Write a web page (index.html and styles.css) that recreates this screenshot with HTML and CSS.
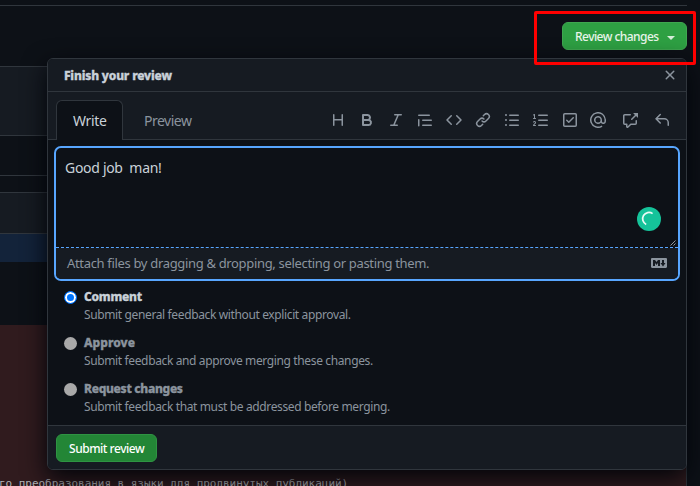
FILE: index.html
```html
<!DOCTYPE html>
<html lang="en">
<head>
<meta charset="utf-8">
<title>Finish your review</title>
<link rel="stylesheet" href="styles.css">
</head>
<body>
<div class="page">
  <header class="toolbar">
    <button class="btn btn-review"><span class="t-review">Review changes</span><i class="caret"></i></button>
  </header>
  <main class="diff">
    <div class="band band-head"></div>
    <div class="band band-gap"></div>
    <div class="band band-thin"></div>
    <div class="band band-file"></div>
    <div class="band band-hunk"></div>
    <div class="band band-empty"></div>
    <div class="band band-deleted"><code>го преобразования в языки для продвинутых публикаций)</code></div>
  </main>

  <section class="modal">
    <div class="modal-head">
      <h1 class="t-title">Finish your review</h1>
      <svg class="icon" viewBox="0 0 16 16"><path d="M3.72 3.72a.75.75 0 011.06 0L8 6.94l3.22-3.22a.75.75 0 111.06 1.06L9.06 8l3.22 3.22a.75.75 0 11-1.06 1.06L8 9.06l-3.22 3.22a.75.75 0 01-1.06-1.06L6.94 8 3.72 4.78a.75.75 0 010-1.06z"/></svg>
    </div>
    <div class="tabs">
      <div class="tab tab-active"><span class="t-write">Write</span></div>
      <div class="tab tab-preview"><span class="t-preview">Preview</span></div>
      <div class="tools">
        <svg class="icon" viewBox="0 0 16 16"><path d="M3.75 2a.75.75 0 01.75.75V7h7V2.75a.75.75 0 011.5 0v10.5a.75.75 0 01-1.5 0V8.5h-7v4.75a.75.75 0 01-1.5 0V2.75A.75.75 0 013.75 2z"/></svg>
        <svg class="icon" viewBox="0 0 16 16"><path fill-rule="evenodd" d="M4 2a1 1 0 00-1 1v10a1 1 0 001 1h5.5a3.5 3.5 0 001.852-6.47A3.5 3.5 0 008.5 2H4zm4.5 5a1.5 1.5 0 100-3H5v3h3.5zM5 9v3h4.5a1.5 1.5 0 000-3H5z"/></svg>
        <svg class="icon" viewBox="0 0 16 16"><path d="M6 2.75A.75.75 0 016.75 2h6.5a.75.75 0 010 1.5h-2.505l-3.858 9H9.25a.75.75 0 010 1.5h-6.5a.75.75 0 010-1.5h2.505l3.858-9H6.75A.75.75 0 016 2.75z"/></svg>
        <svg class="icon" viewBox="0 0 16 16"><path d="M1.75 2.5a.75.75 0 000 1.5h10.5a.75.75 0 000-1.5H1.75zm4 5a.75.75 0 000 1.5h8.5a.75.75 0 000-1.5h-8.5zm0 5a.75.75 0 000 1.5h8.5a.75.75 0 000-1.5h-8.5zM2.5 7.75a.75.75 0 00-1.5 0v6a.75.75 0 001.5 0v-6z"/></svg>
        <svg class="icon" viewBox="0 0 16 16"><path d="M4.72 3.22a.75.75 0 011.06 1.06L2.06 8l3.72 3.72a.75.75 0 11-1.06 1.06L.47 8.53a.75.75 0 010-1.06l4.25-4.25zm6.56 0a.75.75 0 10-1.06 1.06L13.94 8l-3.72 3.72a.75.75 0 101.06 1.06l4.25-4.25a.75.75 0 000-1.06l-4.25-4.25z"/></svg>
        <svg class="icon" viewBox="0 0 16 16"><path d="M7.775 3.275a.75.75 0 001.06 1.06l1.25-1.25a2 2 0 112.83 2.83l-2.5 2.5a2 2 0 01-2.83 0 .75.75 0 00-1.06 1.06 3.5 3.5 0 004.95 0l2.5-2.5a3.5 3.5 0 00-4.95-4.95l-1.25 1.25zm-4.69 9.64a2 2 0 010-2.83l2.5-2.5a2 2 0 012.83 0 .75.75 0 001.06-1.06 3.5 3.5 0 00-4.95 0l-2.5 2.5a3.5 3.5 0 004.95 4.95l1.25-1.25a.75.75 0 00-1.06-1.06l-1.25 1.25a2 2 0 01-2.83 0z"/></svg>
        <svg class="icon" viewBox="0 0 16 16"><path d="M2 4a1 1 0 100-2 1 1 0 000 2zm3.75-1.5a.75.75 0 000 1.5h8.5a.75.75 0 000-1.5h-8.5zm0 5a.75.75 0 000 1.5h8.5a.75.75 0 000-1.5h-8.5zm0 5a.75.75 0 000 1.5h8.5a.75.75 0 000-1.5h-8.5zM3 8a1 1 0 11-2 0 1 1 0 012 0zm-1 6a1 1 0 100-2 1 1 0 000 2z"/></svg>
        <svg class="icon" viewBox="0 0 16 16"><path d="M2.003 2.5a.5.5 0 00-.723-.447l-1.003.5a.5.5 0 00.446.895l.28-.14V6H.5a.5.5 0 000 1h2.006a.5.5 0 100-1h-.503V2.5zM5 3.25a.75.75 0 01.75-.75h8.5a.75.75 0 010 1.5h-8.5A.75.75 0 015 3.25zm0 5a.75.75 0 01.75-.75h8.5a.75.75 0 010 1.5h-8.5A.75.75 0 015 8.25zm0 5a.75.75 0 01.75-.75h8.5a.75.75 0 010 1.5h-8.5a.75.75 0 01-.75-.75zM.924 10.32l.003-.004a.851.851 0 01.144-.153A.66.66 0 011.5 10c.195 0 .306.068.374.146a.57.57 0 01.128.376c0 .453-.269.682-.8 1.078l-.035.025C.692 11.98 0 12.495 0 13.5a.5.5 0 00.5.5h2.003a.5.5 0 000-1H1.146c.132-.197.351-.372.654-.597l.047-.035c.47-.35 1.156-.858 1.156-1.845 0-.365-.118-.744-.377-1.038-.268-.303-.658-.484-1.126-.484-.48 0-.84.202-1.068.392a1.858 1.858 0 00-.348.384l-.007.011a.5.5 0 00.848.531z"/></svg>
        <svg class="icon" viewBox="0 0 16 16"><path fill-rule="evenodd" d="M2.5 2.75a.25.25 0 01.25-.25h10.5a.25.25 0 01.25.25v10.5a.25.25 0 01-.25.25H2.75a.25.25 0 01-.25-.25V2.75zM2.75 1A1.75 1.75 0 001 2.75v10.5c0 .966.784 1.75 1.75 1.75h10.5A1.75 1.75 0 0015 13.25V2.75A1.75 1.75 0 0013.25 1H2.75zm9.03 5.28a.75.75 0 00-1.06-1.06L6.75 9.19 5.28 7.72a.75.75 0 00-1.06 1.06l2 2a.75.75 0 001.06 0l4.5-4.5z"/></svg>
        <svg class="icon icon-mention" viewBox="0 0 16 16"><path fill-rule="evenodd" d="M4.75 2.37a6.5 6.5 0 006.5 11.26.75.75 0 01.75 1.298 8 8 0 113.994-7.273.754.754 0 01.006.095v1.5a2.75 2.75 0 01-5.072 1.475A4 4 0 1112 8v1.25a1.25 1.25 0 002.5 0V7.867a6.5 6.5 0 00-9.75-5.496V2.37zM10.5 8a2.5 2.5 0 10-5 0 2.5 2.5 0 005 0z"/></svg>
        <svg class="icon icon-ref" viewBox="0 0 16 16"><path d="M16 1.25v4.146a.25.25 0 01-.427.177L14.03 4.03l-3.75 3.75a.75.75 0 11-1.06-1.06l3.75-3.75-1.543-1.543A.25.25 0 0111.604 1h4.146a.25.25 0 01.25.25zM2.75 3.5a.25.25 0 00-.25.25v7.5c0 .138.112.25.25.25h2a.75.75 0 01.75.75v2.19l2.72-2.72a.75.75 0 01.53-.22h4.5a.25.25 0 00.25-.25v-2.5a.75.75 0 111.5 0v2.5A1.75 1.75 0 0113.25 13H9.06l-2.573 2.573A1.457 1.457 0 014 14.543V13H2.75A1.75 1.75 0 011 11.25v-7.5C1 2.784 1.784 2 2.75 2h5.5a.75.75 0 010 1.5h-5.5z"/></svg>
        <svg class="icon icon-reply" viewBox="0 0 16 16"><path d="M6.78 1.97a.75.75 0 010 1.06L3.81 6h6.44A4.75 4.75 0 0115 10.75v2.5a.75.75 0 01-1.5 0v-2.5a3.25 3.25 0 00-3.25-3.25H3.81l2.97 2.97a.75.75 0 11-1.06 1.06L1.47 7.28a.75.75 0 010-1.06l4.25-4.25a.75.75 0 011.06 0z"/></svg>
      </div>
    </div>
    <div class="editor">
      <div class="text"><span class="t-body">Good job  man!</span>
        <svg class="spinner" viewBox="0 0 24 24"><circle cx="12" cy="12" r="12" fill="#15c39a"/><path d="M15.6 6.6A6.3 6.3 0 1 0 9.2 17.4" fill="none" stroke="#e9fbf6" stroke-width="1.7"/></svg>
        <svg class="grip" viewBox="0 0 6 6"><path d="M.5 5.5l5-5M3.5 5.5l2-2" fill="none" stroke="#b8bcc2" stroke-width=".8"/></svg>
      </div>
      <div class="attach"><span class="t-attach">Attach files by dragging &amp; dropping, selecting or pasting them.</span>
        <svg class="icon icon-md" viewBox="0 0 16 16"><path fill-rule="evenodd" d="M14.85 3H1.15C.52 3 0 3.52 0 4.15v7.69C0 12.48.52 13 1.15 13h13.69c.64 0 1.15-.52 1.15-1.15v-7.7C16 3.52 15.48 3 14.85 3zM9 11H7V8L5.5 9.92 4 8v3H2V5h2l1.5 2L7 5h2v6zm2.99.5L9.5 8H11V5h2v3h1.5l-2.51 3.5z"/></svg>
      </div>
    </div>
    <div class="options">
      <div class="option option-on"><i class="radio radio-on"></i><div><h2 class="t-comment">Comment</h2><p>Submit general feedback without explicit approval.</p></div></div>
      <div class="option"><i class="radio"></i><div><h2 class="t-approve">Approve</h2><p>Submit feedback and approve merging these changes.</p></div></div>
      <div class="option"><i class="radio"></i><div><h2 class="t-request">Request changes</h2><p>Submit feedback that must be addressed before merging.</p></div></div>
    </div>
    <div class="modal-foot"><button class="btn btn-submit"><span class="t-submit">Submit review</span></button></div>
  </section>
  <div class="highlight"></div>
</div>
</body>
</html>
```
FILE: styles.css
```css
* { box-sizing: border-box; margin: 0; padding: 0; }
body { background: #0d1117; color: #c9d1d9; font-family: "Noto Sans", "Open Sans", sans-serif; font-size: 12px; }
.page { position: relative; width: 700px; height: 486px; overflow: hidden; display: flex; flex-direction: column; }

.toolbar { width: 687px; height: 61px; margin-top: 5px; border-top: 1px solid #30363d; display: flex; justify-content: flex-end; padding-top: 16px; }
.btn { font: 500 12px "Noto Sans", "Open Sans", sans-serif; height: 28px; color: #fff; border: 1px solid #3fa650; border-radius: 6px; display: flex; align-items: center; white-space: nowrap; }
.btn-review { width: 125px; background: #2ea043; padding-left: 12px; }
.btn-submit { width: 101px; background: #238636; border-color: #2f9443; padding-left: 12px; }
.t-review { letter-spacing: -.55px; color: #e8f5ea; padding-top: 1px; }
.t-submit { letter-spacing: -.47px; }
.caret { margin-left: 8px; margin-top: 3px; border: 4px solid transparent; border-top-color: #d5ecd9; border-bottom: 0; }

.diff { width: 687px; flex: 1; display: flex; flex-direction: column; border-right: 1px solid #30363d; }
.band { flex: none; border-top: 1px solid #30363d; }
.band-head { height: 69px; background: #161b22; }
.band-gap { height: 40px; }
.band-thin { height: 17px; }
.band-file { height: 41px; background: #161b22; }
.band-hunk { height: 29px; background: #13233a; }
.band-empty { height: 63px; border-top: 0; }
.band-deleted { flex: 1; background: #301b1e; border-top: 0; display: flex; align-items: flex-end; }
.band-deleted code { font: 11px/14px "DejaVu Sans Mono", "Liberation Mono", monospace; letter-spacing: -.035px; color: #b3b3b8; white-space: pre; margin-left: -1px; margin-bottom: -5px; }

.modal { position: absolute; left: 47px; top: 58px; width: 640px; height: 412px; border: 1px solid #30363d; border-radius: 6px; background: #0d1117; box-shadow: 0 8px 24px #010409; display: flex; flex-direction: column; overflow: hidden; }
.icon { width: 16px; height: 16px; fill: #8b949e; flex: none; display: block; }
.modal-head { height: 33px; background: #161b22; border-bottom: 1px solid #30363d; padding: 0 8px 0 16px; display: flex; align-items: center; justify-content: space-between; }
h1, h2 { font-size: 12px; line-height: 18px; font-weight: 800; white-space: nowrap; -webkit-text-stroke: .35px currentColor; }
.t-title { letter-spacing: -.17px; padding-top: 1px; }
.t-comment { letter-spacing: -.25px; }
.t-approve { letter-spacing: .05px; }
.t-request { letter-spacing: -.3px; }
.tabs { height: 48px; background: #161b22; box-shadow: inset 0 -1px #30363d; display: flex; padding: 8px 16px 0 8px; }
.tab { font-size: 14px; line-height: 20px; height: 40px; white-space: nowrap; }
.tab-active { width: 67px; background: #0d1117; border: 1px solid #30363d; border-bottom: 0; border-radius: 6px 6px 0 0; padding: 10px 0 0 16px; letter-spacing: -.35px; }
.tab-preview { color: #8b949e; padding: 11px 0 0 21px; letter-spacing: -.5px; }
.tools { margin-left: auto; padding-top: 12px; display: flex; gap: 13px; }
.icon-mention { margin-left: -1px; }
.icon-ref { margin-left: 3px; }
.icon-reply { margin-left: 3px; }

.editor { width: 626px; height: 135px; margin: 6px 0 0 6px; flex: none; border: 2px solid #58a6ff; border-radius: 7px; display: flex; flex-direction: column; overflow: hidden; }
.text { position: relative; height: 100px; border-bottom: 1px dashed #58a6ff; padding: 9px 9px; font-size: 14px; line-height: 21px; letter-spacing: -.3px; white-space: pre; }
.spinner { position: absolute; right: 17px; top: 59px; width: 24px; height: 24px; }
.grip { position: absolute; right: 2px; bottom: 1px; width: 6px; height: 6px; }
.attach { flex: 1; background: #161b22; color: #8b949e; display: flex; align-items: center; justify-content: space-between; padding: 0 11px; font-size: 13px; letter-spacing: -.33px; white-space: nowrap; }
.t-attach { padding-bottom: 1px; }
.icon-md { margin-bottom: 1px; }

.options { padding: 7px 16px 0; display: flex; flex-direction: column; gap: 10px; flex: 1; }
.option { display: flex; gap: 7px; height: 36px; color: #8b949e; }
.option-on h2 { color: #c9d1d9; }
.option p { line-height: 18px; letter-spacing: -.37px; white-space: nowrap; }
.radio { width: 13px; height: 13px; margin-top: 3px; border-radius: 50%; background: #a9a9a9; flex: none; }
.radio-on { background: #0075ff; border: 1px solid #0075ff; box-shadow: inset 0 0 0 2px #fff; }
.modal-foot { height: 44px; background: #161b22; border-top: 1px solid #30363d; padding: 8px; }

.highlight { position: absolute; left: 534px; top: 11px; width: 162px; height: 54px; border: 3px solid #f00; border-radius: 2px; }
```
